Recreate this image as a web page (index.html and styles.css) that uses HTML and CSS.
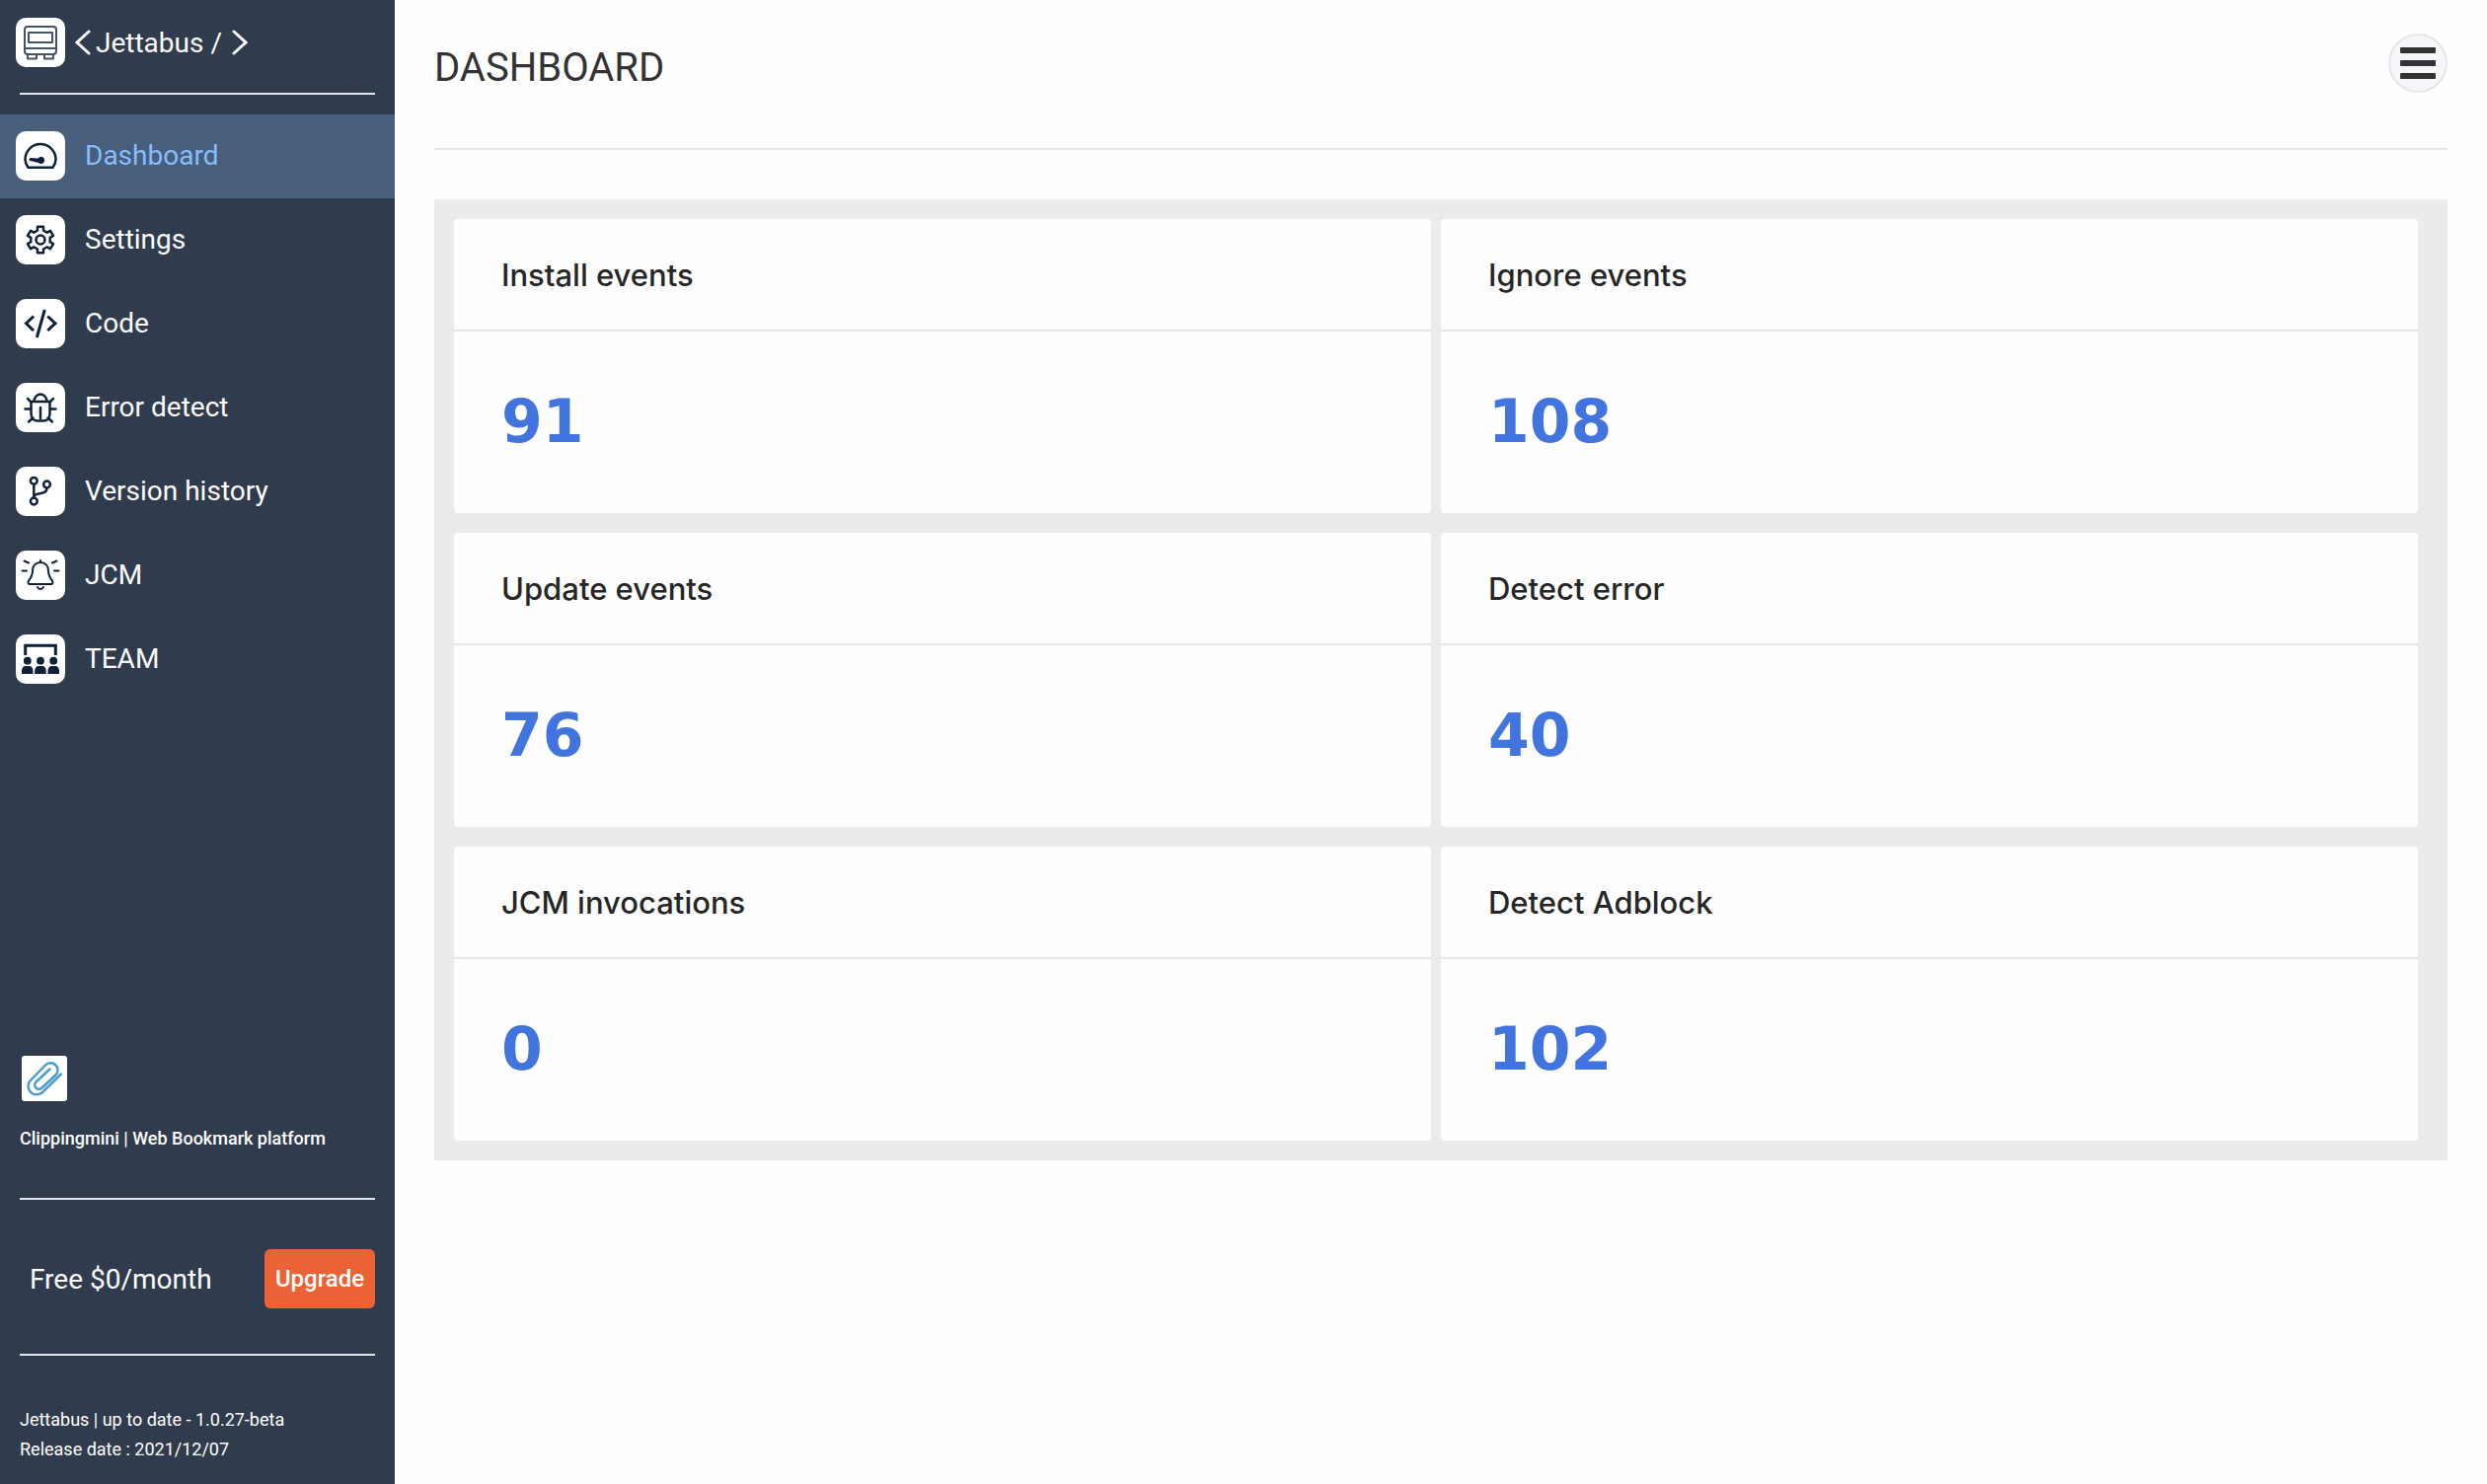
FILE: index.html
```html
<!DOCTYPE html>
<html lang="en">
<head>
  <meta charset="UTF-8" />
  <meta name="viewport" content="width=device-width, initial-scale=1.0"/>
  <title>Jettabus | Dashboard</title>
  <link rel="stylesheet" href="styles.css">
</head>
<body>

  <!-- Sidebar -->
  <aside class="sidebar">
    <div class="brand">
      <span class="icon">
        <svg class="bus" viewBox="0 0 50 50">
          <rect x="9" y="9" width="32" height="28" rx="3"/>
          <rect x="13" y="15" width="24" height="10"/>
          <path d="M9 31h32M12 37v4.5h9V37M29 37v4.5h9V37"/>
        </svg>
      </span>
      <svg class="chevron" viewBox="0 0 16 26"><path d="M14 2L2 13l12 11"/></svg>
      <span class="brand-name">Jettabus /</span>
      <svg class="chevron" viewBox="0 0 16 26"><path d="M2 2l12 11L2 24"/></svg>
    </div>
    <hr>

    <nav class="menu">
      <a class="menu-item active" href="#dashboard">
        <span class="icon">
          <svg viewBox="0 0 50 50">
            <path d="M12.5 36.7C10.5 34 9.5 31 9.5 28.5a15.5 15.5 0 0 1 31 0c0 2.5-1 5.5-3 8.2z"/>
            <path class="fill" d="M15 27l7.5.5a3.6 3.6 0 1 1 .5 4.500L15 30a1.5 1.5 0 0 1 0-3z"/>
          </svg>
        </span>
        <span>Dashboard</span>
      </a>
      <a class="menu-item" href="#settings">
        <span class="icon">
          <svg viewBox="0 0 50 50">
            <path d="M22 15.500v-3.800h6v3.800l3.700 2.200 3.300-1.900 3 5.100-3.300 1.900v4.400l3.300 1.900-3 5.100-3.300-1.900-3.700 2.200v3.800h-6v-3.800l-3.700-2.200-3.300 1.900-3-5.100 3.300-1.900v-4.400L12 20.900l3-5.100 3.300 1.900z"/>
            <circle cx="25" cy="25" r="4.5"/>
          </svg>
        </span>
        <span>Settings</span>
      </a>
      <a class="menu-item" href="#code">
        <span class="icon">
          <svg viewBox="0 0 50 50">
            <path class="thick" d="M18 17.5l-7.500 7.200L18 32M32.3 17.5l7.700 7.200-7.700 7.300M29.3 11l-8 28"/>
          </svg>
        </span>
        <span>Code</span>
      </a>
      <a class="menu-item" href="#errors">
        <span class="icon">
          <svg viewBox="0 0 50 50">
            <path d="M18.5 19a6.5 7.5 0 0 1 13 0M15.5 19h19v12c0 5-3 7.5-6.5 7.5h-6c-3.5 0-6.5-2.500-6.5-7.500zM25 25v11M12 16l3.5 3.5M9.5 26.500h6M13 39.5l4.5-4M38 16l-3.5 3.5M40.5 26.500h-6M37 39.5l-4.500-4"/>
          </svg>
        </span>
        <span>Error detect</span>
      </a>
      <a class="menu-item" href="#versions">
        <span class="icon">
          <svg viewBox="0 0 50 50">
            <circle cx="18.3" cy="14.3" r="3.4"/>
            <circle cx="31.5" cy="18" r="3.4"/>
            <circle cx="18.3" cy="35" r="3.4"/>
            <path d="M18.3 18v13.500M31.5 21.500c0 8-13 4-13 9"/>
          </svg>
        </span>
        <span>Version history</span>
      </a>
      <a class="menu-item" href="#jcm">
        <span class="icon">
          <svg viewBox="0 0 50 50">
            <path class="thin" d="M25 10v2M25 12c-5 0-8 3.5-8 8.5 0 5-1.500 7-4 10-1 1.500-.5 3.500 1.500 3.500h21c2 0 2.500-2 1.500-3.500-2.500-3-4-5-4-10 0-5-3-8.500-8-8.500zM22 37c1 2.500 5 2.500 6 0M6.5 20.500h4.500M39 20.500h4.500M8.500 10.500l4.500 2M41.500 10.500l-4.500 2"/>
          </svg>
        </span>
        <span>JCM</span>
      </a>
      <a class="menu-item" href="#team">
        <span class="icon">
          <svg viewBox="0 0 50 50">
            <path class="thick" d="M9.7 21V11.300h30.600V21"/>
            <g class="fill">
              <circle cx="11.8" cy="26.7" r="3.9"/>
              <circle cx="25" cy="26.7" r="3.9"/>
              <circle cx="38.2" cy="26.7" r="3.9"/>
              <path d="M6 40v-3c0-3 1.500-5 4-5h3.500c2.500 0 4 2 4 5v3zM19.200 40v-3c0-3 1.500-5 4-5h3.500c2.500 0 4 2 4 5v3zM32.500 40v-3c0-3 1.500-5 4-5H40c2.500 0 4 2 4 5v3z"/>
            </g>
          </svg>
        </span>
        <span>TEAM</span>
      </a>
    </nav>

    <div class="sidebar-bottom">
      <a class="promo" href="#clippingmini">
        <svg class="clip" viewBox="0 0 46 46">
          <path d="M40 18.500L20.500 37.500A8.600 8.600 0 0 1 8 26L24 9.500a7.200 7.200 0 0 1 10.500 10L20.500 32.500a4.200 4.200 0 0 1-6-6L28.500 13.500"/>
        </svg>
        <span>Clippingmini | Web Bookmark platform</span>
      </a>
      <hr>
      <div class="plan">
        <span>Free $0/month</span>
        <button class="upgrade" type="button">Upgrade</button>
      </div>
      <hr>
      <footer class="version">
        Jettabus | up to date - 1.0.27-beta<br>
        Release date : 2021/12/07
      </footer>
    </div>
  </aside>

  <!-- Main content -->
  <main>
    <header>
      <h1>DASHBOARD</h1>
      <button class="menu-button" type="button" aria-label="Menu">
        <svg viewBox="0 0 36 32">
          <rect y="0" width="36" height="6" rx="1"/>
          <rect y="13" width="36" height="6" rx="1"/>
          <rect y="26" width="36" height="6" rx="1"/>
        </svg>
      </button>
    </header>

    <section class="cards">
      <article class="card">
        <h2>Install events</h2>
        <p>91</p>
      </article>
      <article class="card">
        <h2>Ignore events</h2>
        <p>108</p>
      </article>
      <article class="card">
        <h2>Update events</h2>
        <p>76</p>
      </article>
      <article class="card">
        <h2>Detect error</h2>
        <p>40</p>
      </article>
      <article class="card">
        <h2>JCM invocations</h2>
        <p>0</p>
      </article>
      <article class="card">
        <h2>Detect Adblock</h2>
        <p>102</p>
      </article>
    </section>
  </main>

</body>
</html>
```
FILE: styles.css
```css
* {
  box-sizing: border-box;
}

body {
  display: flex;
  min-height: 100vh;
  margin: 0;
  background: #fefefe;
  color: #333;
  font-family: Roboto, sans-serif;
}

/* Sidebar */
.sidebar {
  display: flex;
  flex-direction: column;
  flex: 0 0 400px;
  background: #303c4d;
  color: white;
  font-size: 28px;
}

.sidebar hr {
  width: auto;
  height: 2px;
  margin: 0 20px;
  border: none;
  background: #e6e6e6;
}

.brand {
  display: flex;
  align-items: center;
  padding: 18px 16px 26px;
}

.brand-name {
  margin: 0 10px 0 5px;
}

.chevron {
  width: 16px;
  height: 26px;
  fill: none;
  stroke: white;
  stroke-width: 3;
  stroke-linecap: round;
}

.brand .icon {
  margin-right: 10px;
}

.icon {
  flex: none;
  width: 50px;
  height: 50px;
  border-radius: 10px;
  background: white;
}

.icon svg {
  display: block;
  fill: none;
  stroke: #0f2138;
  stroke-width: 2.5;
  stroke-linejoin: round;
  stroke-linecap: round;
}

.icon .bus {
  stroke: #465365;
  stroke-width: 2;
}

.icon .thick {
  stroke-width: 3;
  stroke-linejoin: miter;
  stroke-linecap: butt;
}

.icon .thin {
  stroke-width: 2;
}

.icon .fill {
  fill: #0f2138;
  stroke: none;
}

/* Menu */
.menu {
  margin-top: 20px;
}

.menu-item {
  display: flex;
  align-items: center;
  gap: 20px;
  height: 85px;
  padding: 0 16px 2px;
  color: white;
  line-height: 36px;
  text-decoration: none;
}

.menu-item.active {
  background: #475f7d;
  color: #88bdf9;
}

/* Bottom part */
.sidebar-bottom {
  margin-top: auto;
}

.promo {
  display: flex;
  flex-direction: column;
  gap: 22px;
  padding: 0 20px 44px;
  color: white;
  font-size: 18px;
  font-weight: 500;
  line-height: 32px;
  text-decoration: none;
}

.clip {
  width: 46px;
  height: 46px;
  margin-left: 2px;
  border-radius: 3px;
  background: white;
  fill: none;
  stroke: #4c9bcb;
  stroke-width: 2.5;
  stroke-linecap: round;
}

.plan {
  display: flex;
  align-items: center;
  justify-content: space-between;
  padding: 50px 20px 46px 30px;
}

.upgrade {
  width: 112px;
  height: 60px;
  padding: 0;
  border: none;
  border-radius: 6px;
  background: #ea6236;
  color: white;
  font: 500 24px Roboto, sans-serif;
  cursor: pointer;
}

.version {
  padding: 50px 20px 20px;
  font-size: 18px;
  line-height: 30px;
}

/* Main content */
main {
  flex: 1;
  padding: 0 40px;
}

header {
  display: flex;
  align-items: center;
  justify-content: space-between;
  height: 152px;
  padding-bottom: 22px;
  border-bottom: 2px solid #e6e6e6;
}

h1 {
  margin: 8px 0 0;
  font-size: 40px;
  font-weight: 400;
}

.menu-button {
  display: flex;
  align-items: center;
  justify-content: center;
  width: 60px;
  height: 60px;
  border: 2px solid #e6e6e6;
  border-radius: 50%;
  background: #f5f6f9;
  cursor: pointer;
}

.menu-button svg {
  flex: none;
  width: 36px;
  height: 32px;
  fill: #333;
}

/* Cards */
.cards {
  display: grid;
  grid-template-columns: 1fr 1fr;
  gap: 20px 10px;
  margin-top: 50px;
  padding: 20px 30px 20px 20px;
  background: #ebebeb;
}

.card {
  border-radius: 4px;
  background: #fefefe;
}

.card h2 {
  margin: 0;
  padding: 37px 48px 35px;
  border-bottom: 2px solid #e6e6e6;
  color: #262626;
  font-family: Inter, sans-serif;
  font-size: 31px;
  font-weight: 500;
  line-height: 40px;
}

.card p {
  margin: 0;
  padding: 56px 48px 58px;
  color: #4174df;
  font-family: "DejaVu Sans", sans-serif;
  font-size: 60px;
  font-weight: 700;
  line-height: 70px;
}
```
